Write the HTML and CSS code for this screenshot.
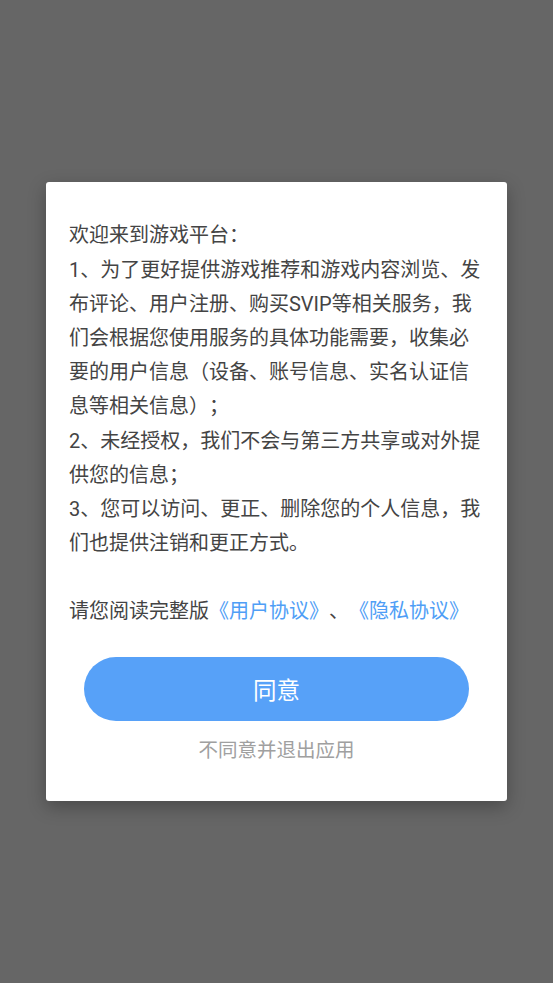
FILE: index.html
```html
<!DOCTYPE html>
<html lang="zh-CN">
<head>
<meta charset="utf-8">
<title>用户协议</title>
<link rel="stylesheet" href="styles.css">
</head>
<body>
<div class="overlay">
  <div class="dialog">
    <div class="content">
      <div class="line">欢迎来到游戏平台：</div>
      <div class="line">1、为了更好提供游戏推荐和游戏内容浏览、发</div>
      <div class="line">布评论、用户注册、购买SVIP等相关服务，我</div>
      <div class="line">们会根据您使用服务的具体功能需要，收集必</div>
      <div class="line">要的用户信息（设备、账号信息、实名认证信</div>
      <div class="line">息等相关信息）；</div>
      <div class="line">2、未经授权，我们不会与第三方共享或对外提</div>
      <div class="line">供您的信息；</div>
      <div class="line">3、您可以访问、更正、删除您的个人信息，我</div>
      <div class="line">们也提供注销和更正方式。</div>
      <div class="line blank"></div>
      <div class="line">请您阅读完整版<a class="link" href="#">《用户协议》</a>、<a class="link" href="#">《隐私协议》</a></div>
    </div>
    <button class="agree">同意</button>
    <div class="decline">不同意并退出应用</div>
  </div>
</div>
</body>
</html>
```
FILE: styles.css
```css
html, body {
  margin: 0;
  padding: 0;
  height: 100%;
}
body {
  background: #666666;
  font-family: Roboto, "Noto Sans CJK SC", sans-serif;
}
.overlay {
  height: 100%;
  display: flex;
  align-items: center;
  justify-content: center;
}
.dialog {
  width: 461px;
  box-sizing: border-box;
  background: #ffffff;
  border-radius: 3px;
  padding: 36px 0 35px;
  box-shadow: 0 6px 18px rgba(0, 0, 0, 0.28);
  display: flex;
  flex-direction: column;
  align-items: center;
  text-spacing-trim: space-all;
}
.content {
  align-self: stretch;
  padding: 0 23px;
  font-size: 20px;
  line-height: 34.2px;
  color: #444444;
  text-spacing-trim: space-all;
  font-feature-settings: "halt" 0, "chws" 0;
}
.line {
  white-space: nowrap;
  height: 34.2px;
}
.link {
  color: #4f9ef6;
  text-decoration: none;
}
.agree {
  margin-top: 28px;
  width: 385px;
  height: 64px;
  border: none;
  border-radius: 32px;
  background: #57a1f8;
  color: #ffffff;
  font-family: Roboto, "Noto Sans CJK SC", sans-serif;
  font-size: 23.5px;
  padding: 0;
}
.decline {
  margin-top: 15px;
  font-size: 19.5px;
  line-height: 30px;
  color: #a0a0a0;
}
```
